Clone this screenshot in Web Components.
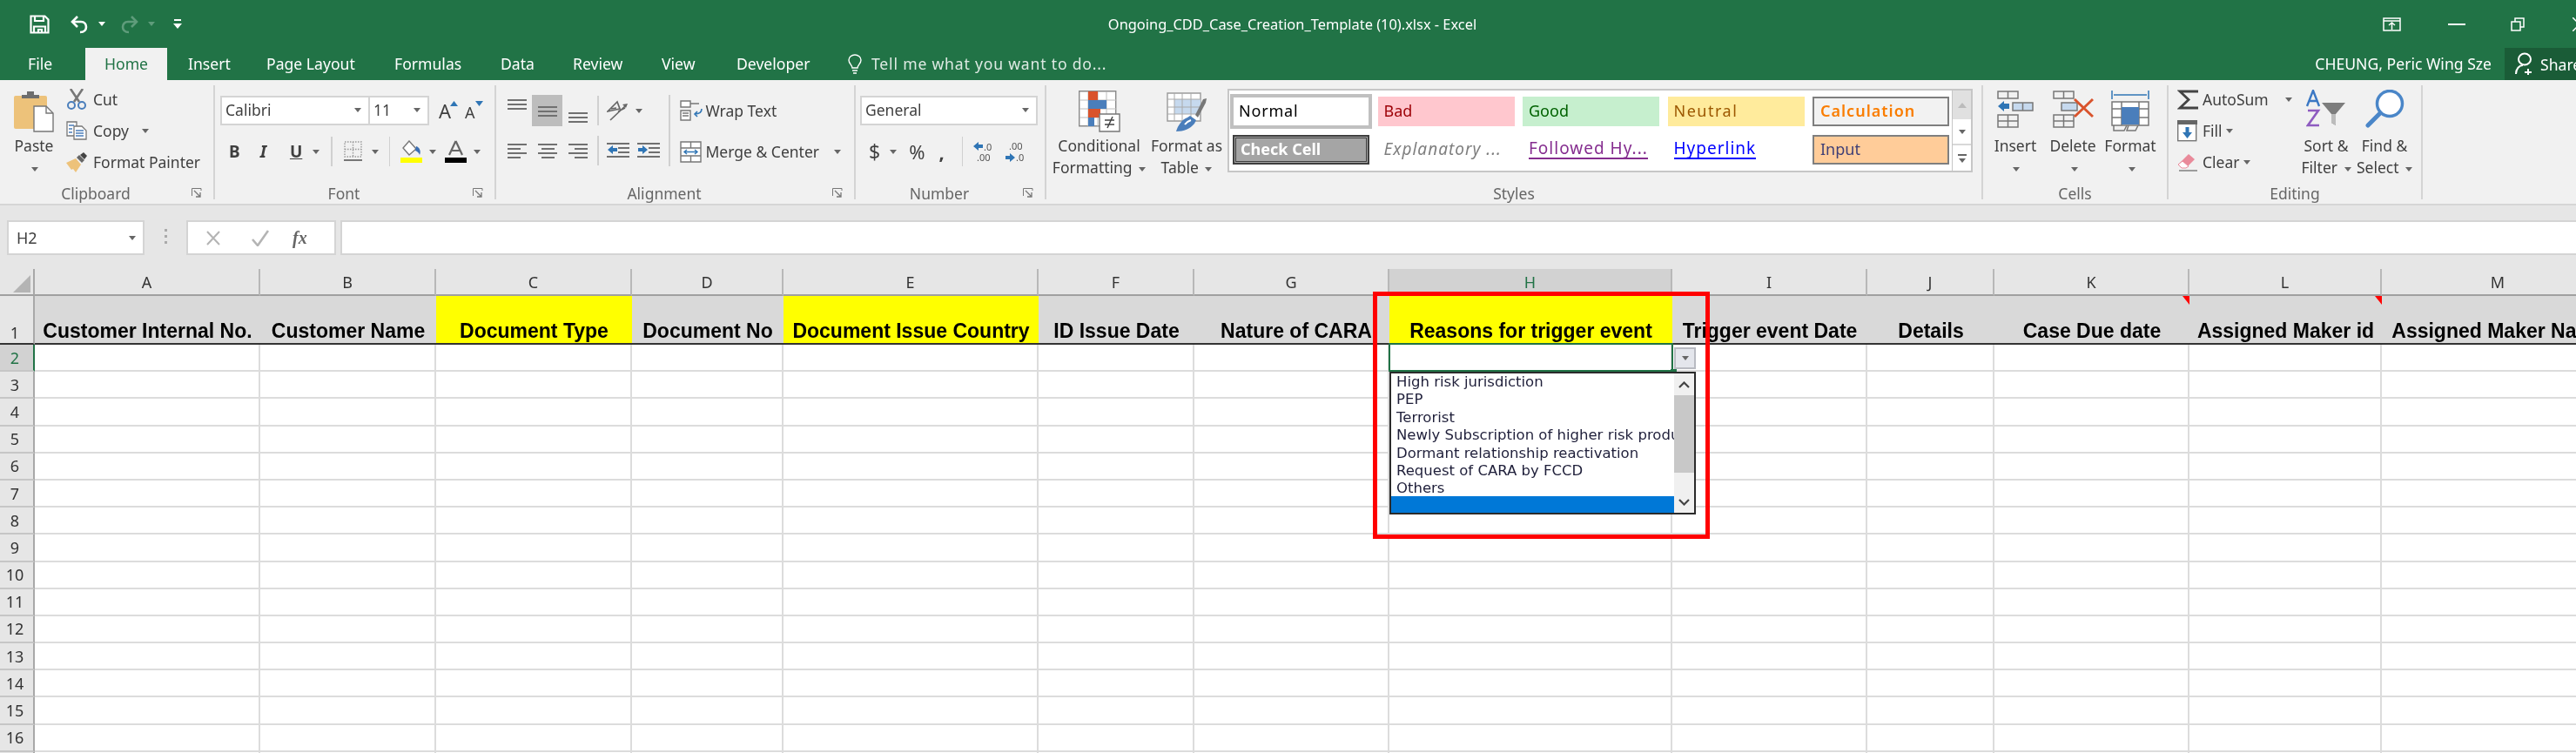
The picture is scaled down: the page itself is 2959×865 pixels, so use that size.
<!DOCTYPE html>
<html lang="en">
<head>
<meta charset="utf-8">
<title>Ongoing_CDD_Case_Creation_Template (10).xlsx - Excel</title>
<style>
    html, body { margin: 0; height: 865px; overflow: hidden; background: #fff; }
    body { display: flex; flex-direction: column; width: 2959px; font-family: "Noto Sans", sans-serif; filter: blur(.45px); }
</style>
</head>
<body>
<excel-titlebar></excel-titlebar>
<excel-tabs></excel-tabs>
<excel-ribbon></excel-ribbon>
<excel-formula-bar></excel-formula-bar>
<excel-sheet></excel-sheet>

<script>
// small helpers shared by the components
const caret = (color = '#666') => `<i style="display:inline-block;width:0;height:0;border:4.5px solid transparent;border-bottom:0;border-top:5px solid ${color}"></i>`;
const lines = (rows, w = 24, h = 18) => `<svg width="${w}" height="${h}" viewBox="0 0 ${w} ${h}" fill="#707070">${rows.map(r => `<rect x="${r[0]}" y="${r[1]}" width="${r[2]}" height="2"/>`).join('')}</svg>`;

const icons = {
    save: `<svg width="23" height="22" viewBox="0 0 23 22" fill="none" stroke="#fff" stroke-width="2.2"><path d="M1.5 1.5h16l4 4v15h-20z"/><path d="M6 2v5h10V2"/><path d="M5 20.5v-7h13v7M10 20v-3h4v3"/></svg>`,
    undo: `<svg width="22" height="22" viewBox="0 0 22 22" fill="none" stroke="#fff" stroke-width="2.6"><path d="M9 2 3 8l6 6"/><path d="M3 8h10c4 0 6 3 6 6s-2 6-7 6"/></svg>`,
    redo: `<svg width="22" height="22" viewBox="0 0 22 22" fill="none" stroke="#5f9c7b" stroke-width="2.6"><path d="m13 2 6 6-6 6"/><path d="M19 8H9c-4 0-6 3-6 6s2 6 7 6"/></svg>`,
    bulb: `<svg width="18" height="24" viewBox="0 0 18 24" fill="none" stroke="#fff" stroke-width="1.4"><path d="M6 16c0-3-4-5-4-9a7 6 0 0 1 14 0c0 4-4 6-4 9z"/><path d="M6 19h6M7 22h4"/></svg>`,
    person: `<svg width="24" height="27" viewBox="0 0 24 27" fill="none" stroke="#fff" stroke-width="2"><ellipse cx="12" cy="8" rx="7" ry="6.5"/><path d="M2 25c0-6 4-10 8-10M16 19v7M12 23h8"/></svg>`,
    paste: `<svg width="46" height="48" viewBox="0 0 46 48"><rect x="0" y="6" width="38" height="38" rx="2" fill="#edc27a"/><path d="M9 9V5h6V1h8v4h6v4z" fill="#6e6e6e"/><path d="M23 18h14l8 8v21H23z" fill="#fff" stroke="#777" stroke-width="1.4"/><path d="M37 18v8h8" fill="none" stroke="#777" stroke-width="1.4"/></svg>`,
    cut: `<svg width="24" height="24" viewBox="0 0 24 24" fill="none"><path d="M5 0 15 15M19 0 9 15" stroke="#777" stroke-width="2.6"/><circle cx="6" cy="19" r="4" stroke="#4a7ebb" stroke-width="2"/><circle cx="18" cy="19" r="4" stroke="#4a7ebb" stroke-width="2"/></svg>`,
    copy: `<svg width="24" height="22" viewBox="0 0 24 22" fill="#fff" stroke="#777" stroke-width="1.3"><path d="M1 1h11v16H1z"/><path d="M9 6h9l5 5v10H9z"/><path d="M3 5h6M3 9h4M3 13h4" stroke="#4a7ebb"/><path d="M11 11h9M11 14h9M11 17h9" stroke="#4a7ebb"/></svg>`,
    painter: `<svg width="25" height="23" viewBox="0 0 25 23"><path d="M0 12 11 7l6 7-6 9-3-4-2 1z" fill="#edc27a"/><path d="m12 6 6 6 3-3-6-6z" fill="#666"/><path d="m16 3 5 5 3-4-4-4z" fill="#444"/></svg>`,
    borders: `<svg width="21" height="25" viewBox="0 0 21 25" fill="none" stroke="#999" stroke-width="1.4" stroke-dasharray="1.5 1.5"><path d="M1 1h19v17H1zM10.500 1v17M1 9.500h19"/><path d="M0 22h21" stroke="#777" stroke-width="2" stroke-dasharray="none"/></svg>`,
    fill: `<svg width="25" height="26" viewBox="0 0 25 26"><path d="M10 1 3 9l7 8 8-7z" fill="#fff" stroke="#777" stroke-width="1.4"/><path d="M18 7c4 1 6 6 4 10-1-3-3-4-5-5z" fill="#3b6fb5"/><rect y="20" width="25" height="6" fill="#ff0"/></svg>`,
    fontcolor: `<svg width="25" height="26" viewBox="0 0 25 26"><path d="M12.500 1 5 17m15 0L12.500 1M8 12h9" fill="none" stroke="#666" stroke-width="2.200"/><rect y="20" width="25" height="6" fill="#000"/></svg>`,
    orient: `<svg width="25" height="24" viewBox="0 0 25 24" fill="none" stroke="#666" stroke-width="1.7"><path d="M1 13 12 2l3 8zM5 10l6-1M13 13l8-4M4 23 22 6"/><path d="m24 4-6 1 4 4z" fill="#666" stroke="none"/></svg>`,
    indentL: `<svg width="26" height="20" viewBox="0 0 26 20"><path d="M0 1h26v2H0zM13 6h13v2H13zM13 11h13v2H13zM0 16h26v2H0z" fill="#707070"/><path d="m1 9 6-5v3h5v4H7v3z" fill="#2f75b5"/></svg>`,
    indentR: `<svg width="26" height="20" viewBox="0 0 26 20"><path d="M0 1h26v2H0zM13 6h13v2H13zM13 11h13v2H13zM0 16h26v2H0z" fill="#707070"/><path d="m12 9-6-5v3H1v4h5v3z" fill="#2f75b5"/></svg>`,
    wrap: `<svg width="26" height="24" viewBox="0 0 26 24" fill="none"><path d="M1 1h11v7H1zM1 12h11v11H1z" stroke="#777" stroke-width="1.400" fill="#fff"/><path d="M3 15h7M3 18h7M12 4h10" stroke="#777" stroke-width="1.400"/><path d="M25 10c0 4-3 6-8 6m3-3-3 3 3 3" stroke="#2f75b5" stroke-width="1.600"/></svg>`,
    merge: `<svg width="25" height="25" viewBox="0 0 25 25" fill="#fff" stroke="#777" stroke-width="1.400"><path d="M1 1h23v23H1zM1 8h23M1 17h23M12.500 1v7M12.500 17v7"/><path d="M5 12.500h15M8 10l-3 2.500L8 15M17 10l3 2.500-3 2.500" stroke="#2f75b5" fill="none"/></svg>`,
    cond: `<svg width="48" height="48" viewBox="0 0 48 48"><path d="M.7.7h42v40H.7z" fill="#fff" stroke="#8a8a8a" stroke-width="1.4"/><path d="M11 1v40M22 1v40M32 1v40M1 11h42M1 21h42M1 31h42" stroke="#bdbdbd"/><rect x="11" y="1" width="11" height="10" fill="#d9532c"/><rect x="11" y="11" width="21" height="10" fill="#4a7ebb"/><rect x="11" y="21" width="14" height="10" fill="#d9532c"/><rect x="11" y="31" width="7" height="10" fill="#4a7ebb"/><path d="M24 27h23v20H24z" fill="#fff" stroke="#777" stroke-width="1.400"/><path d="M30 34h11M30 39h11M39 30l-6 13" stroke="#444" stroke-width="1.500" fill="none"/></svg>`,
    table: `<svg width="46" height="45" viewBox="0 0 46 45"><path d="M1 1h38v32H1z" fill="#fff" stroke="#9a9a9a" stroke-width="1.400"/><rect x="9" y="8" width="30" height="17" fill="#c6d9ee"/><path d="M9 1v32M18 1v32M28 1v32M1 8h38M1 17h38M1 25h38" stroke="#aaa"/><path d="m33 26 9-18 4-1-1 5-9 17z" fill="#777"/><path d="M11 45c2-7 7-14 13-16l3-2 7 5-2 4c-5 6-12 9-21 9z" fill="#4a7ebb"/><path d="M21 37c2-3 4-4 7-5" stroke="#fff" stroke-width="2" fill="none"/></svg>`,
    insert: `<svg width="42" height="43" viewBox="0 0 42 43" fill="none" stroke="#777" stroke-width="1.500"><path d="M1 1h23v8H1zM12.500 1v8M1 28h23v14H1zM12.500 28v14M1 35h23"/><path d="M18 14h23v9H18zM29.500 14v9" fill="#c6d9ee"/><path d="m1 18 7-6v3h6v6H8v3z" fill="#2f75b5" stroke="none"/></svg>`,
    del: `<svg width="47" height="43" viewBox="0 0 47 43" fill="none" stroke="#777" stroke-width="1.500"><path d="M1 1h23v8H1zM12.500 1v8M1 28h23v14H1zM12.500 28v14M1 35h23"/><path d="M10 14h18v9H10z" fill="#c6d9ee"/><path d="m25 10 21 20M46 10 25 30" stroke="#d9532c" stroke-width="3"/></svg>`,
    format: `<svg width="44" height="49" viewBox="0 0 44 49" fill="none" stroke="#777" stroke-width="1.500"><path d="M1 1v10M43 1v10" stroke="#2f75b5"/><path d="M3 6h38" stroke="#2f75b5"/><path d="M1 14h42v27H1z" fill="#fff"/><path d="M12 14v27M32 14v27M1 22h42M1 32h42"/><rect x="12" y="20" width="20" height="20" fill="#4a7ebb" stroke="none"/><path d="M3 41v6h12l3-6M20 41l-2 6h10l3-6"/></svg>`,
    sigma: `<svg width="25" height="25" viewBox="0 0 25 25" fill="none" stroke="#444" stroke-width="2.800"><path d="M24 3H3l10 9.500L3 22h21"/></svg>`,
    filldown: `<svg width="23" height="25" viewBox="0 0 23 25"><rect x=".7" y=".7" width="21" height="23" fill="#fff" stroke="#777" stroke-width="1.400"/><rect width="23" height="5" fill="#666"/><path d="M11.500 21 6 14h3.500V8h4v6H17z" fill="#2f75b5"/></svg>`,
    clear: `<svg width="24" height="21" viewBox="0 0 24 21"><path d="M1 13 13 1l7 6-10 10H5z" fill="#e98a9a"/><path d="m1 13 5-4 7 6-3 2H5z" fill="#fff" stroke="#e98a9a"/><path d="M2 20h21" stroke="#777" stroke-width="1.400"/></svg>`,
    sort: `<svg width="46" height="44" viewBox="0 0 46 44" fill="none"><path d="M1 19 8 1l7 18M4 13h8" stroke="#3b78c4" stroke-width="2.400"/><path d="M2 24h12L2 41h13" stroke="#8e5bc0" stroke-width="2.600"/><path d="M18 15h27L34 28v13l-5-3V28z" fill="#7d7d7d"/><path d="M29 28v10l5 3V28" fill="#bcbcbc"/></svg>`,
    find: `<svg width="46" height="44" viewBox="0 0 46 44" fill="none"><circle cx="29" cy="16" r="14.500" fill="#fff" stroke="#4a86c8" stroke-width="3.500"/><path d="M18 27 4 41" stroke="#4a86c8" stroke-width="5" stroke-linecap="round"/></svg>`,
    launcher: `<svg width="12" height="12" viewBox="0 0 12 12" fill="none" stroke="#777"><path d="M.5 9V.5H11V3"/><path d="M3 3l7 7M10 5v5H5" stroke-width="1.300"/></svg>`
};

class ExcelTitlebar extends HTMLElement {
    constructor() {
        super();
        this.attachShadow({ mode: 'open' });
        this.shadowRoot.innerHTML = `
            <style>
                :host { display: grid; grid-template-columns: 1fr auto 1fr; align-items: center; height: 55px; background: #217346; color: #fff; font: 16.400px "Noto Sans", sans-serif; }
                .qat, .win { display: flex; align-items: center; }
                .qat { padding-left: 34px; }
                .title { padding-left: 10px; }
                .win { justify-content: flex-end; }
                .win svg { display: block; }
            </style>
            <div class="qat">
                ${icons.save}
                <span style="margin-left:23px;display:flex">${icons.undo}</span>
                <span style="margin-left:11px;display:flex">${caret('#fff')}</span>
                <span style="margin-left:17px;display:flex">${icons.redo}</span>
                <span style="margin-left:10px;display:flex">${caret('#5f9c7b')}</span>
                <svg style="margin-left:21px" width="10" height="12" viewBox="0 0 10 12" fill="#fff"><rect x="1" width="8" height="2"/><path d="M0 5h10l-5 6z"/></svg>
            </div>
            <div class="title">Ongoing_CDD_Case_Creation_Template (10).xlsx - Excel</div>
            <div class="win">
                <svg width="21" height="16" viewBox="0 0 21 16" fill="none" stroke="#fff" stroke-width="1.500"><path d="M1 1h19v14H1zM1 4h19M10.500 14V6M7 9l3.500-3L14 9"/></svg>
                <svg style="margin-left:54px" width="20" height="2" viewBox="0 0 20 2"><rect width="20" height="2" fill="#fff"/></svg>
                <svg style="margin-left:52px" width="16" height="16" viewBox="0 0 16 16" fill="none" stroke="#fff" stroke-width="1.500"><path d="M1 5h10v10H1zM5 5V1h10v10h-4"/></svg>
                <svg style="margin-left:55px" width="4" height="16" viewBox="0 0 4 16" fill="none" stroke="#fff" stroke-width="1.500"><path d="M0 0 8 8M0 16 8 8"/></svg>
            </div>
        `;
    }
}

class ExcelTabs extends HTMLElement {
    constructor() {
        super();
        this.attachShadow({ mode: 'open' });
        const tabs = [['Insert', 90], ['Page Layout', 147], ['Formulas', 122], ['Data', 83], ['Review', 102], ['View', 86], ['Developer', 127]];
        this.shadowRoot.innerHTML = `
            <style>
                :host { display: flex; align-items: stretch; height: 37px; background: #217346; color: #fff; font: 17.600px/36px "Noto Sans", sans-serif; }
                span { white-space: nowrap; flex: none; }
                .file { margin-left: 32px; width: 66px; }
                .home { width: 94px; background: #f1f1f1; color: #217346; text-align: center; }
                .tell { margin-left: 10px; letter-spacing: .8px; opacity: .85; }
                .user { margin-left: auto; margin-right: 15px; }
                .share { display: flex; align-items: center; width: 82px; padding-left: 11px; box-sizing: border-box; background: #1a5c37; overflow: hidden; }
                svg { flex: none; }
            </style>
            <span class="file">File</span>
            <span class="home">Home</span>
            <span style="width:24px"></span>
            ${tabs.map(t => `<span style="width:${t[1]}px">${t[0]}</span>`).join('')}
            <span style="display:flex;align-items:center">${icons.bulb}</span>
            <span class="tell">Tell me what you want to do...</span>
            <span class="user">CHEUNG, Peric Wing Sze</span>
            <div class="share">${icons.person}<span style="margin-left:6px">Share</span></div>
        `;
    }
}

// one labelled section of the ribbon
class RibbonGroup extends HTMLElement {
    constructor() {
        super();
        this.attachShadow({ mode: 'open' });
        const launcher = this.hasAttribute('launcher') ? `<span class="launch">${icons.launcher}</span>` : '';
        this.shadowRoot.innerHTML = `
            <style>
                :host { display: flex; flex-direction: column; box-sizing: border-box; height: 131px; border-right: 2px solid #d4d4d4; flex: none; }
                .body { display: flex; height: 114px; flex: none; }
                .foot { display: flex; align-items: center; height: 20px; flex: none; color: #666; font-size: 17.500px; }
                .name { flex: 1; text-align: center; }
                .launch { width: 25px; display: flex; align-items: center; }
            </style>
            <div class="body"><slot></slot></div>
            <div class="foot"><span class="name">${this.getAttribute('label')}</span>${launcher}</div>
        `;
    }
}

// tall button: icon on top, one or two lines of text under it
class RibbonBig extends HTMLElement {
    constructor() {
        super();
        this.attachShadow({ mode: 'open' });
        const [first, second] = this.getAttribute('text').split('|');
        const lift = this.getAttribute('lift') || 0;
        this.shadowRoot.innerHTML = `
            <style>
                :host { display: flex; flex-direction: column; align-items: center; flex: none; }
                .ico { display: flex; align-items: flex-end; height: 54px; box-sizing: border-box; padding-bottom: ${lift}px; flex: none; }
                .txt { margin-top: 3px; text-align: center; line-height: 25px; white-space: nowrap; }
                .txt i { vertical-align: 2px; margin-left: 3px; }
                svg { display: block; }
            </style>
            <div class="ico">${icons[this.getAttribute('icon')]}</div>
            <div class="txt">${first}<br>${second || ''}${caret()}</div>
        `;
    }
}

class ExcelRibbon extends HTMLElement {
    constructor() {
        super();
        this.attachShadow({ mode: 'open' });
        this.shadowRoot.innerHTML = `
            <style>
                :host { display: flex; height: 144px; box-sizing: border-box; padding-top: 6px; background: #f1f1f1; border-bottom: 2px solid #d6d6d6; color: #3f3f3f; font: 17.500px "Noto Sans", sans-serif; }
                svg { display: block; flex: none; }
                i { flex: none; }
                .col { display: flex; flex-direction: column; }
                .small { display: flex; align-items: center; box-sizing: border-box; height: 36px; padding-bottom: 4px; white-space: nowrap; }
                .small .lead { width: 31px; flex: none; }
                .row { display: flex; align-items: center; }
                .r1 { height: 34px; margin-top: 12px; }
                .r2 { height: 34px; margin-top: 13px; }
                .combo { display: flex; align-items: center; justify-content: space-between; box-sizing: border-box; height: 34px; padding: 0 8px 2px 4px; background: #fff; border: 2px solid #d4d4d4; }
                .sep { width: 1.500px; height: 34px; background: #d0d0d0; flex: none; }
                .cell { display: flex; align-items: center; justify-content: center; width: 35px; height: 36px; flex: none; }
                .on { background: #bdbdbd; }
                b, em, u { font-style: normal; font-weight: 700; }
                .gal { display: flex; box-sizing: border-box; width: 856px; height: 96px; margin: 4px 0 0 7px; background: #fff; border: 2px solid #c6c6c6; flex: none; }
                .grid { display: grid; grid-template-columns: repeat(5, 157px); grid-template-rows: 34px 34px; column-gap: 9.500px; row-gap: 10px; padding: 7px 0 0 4px; width: 831px; box-sizing: border-box; font-size: 18px; }
                .st { display: flex; align-items: center; box-sizing: border-box; padding: 0 0 2px 7px; overflow: hidden; white-space: nowrap; }
                .scroll { display: flex; flex-direction: column; width: 21px; flex: none; border-left: 1px solid #c6c6c6; }
                .scroll span { display: flex; align-items: center; justify-content: center; }
            </style>

            <rb-group label="Clipboard" launcher style="width:247px">
                <div style="display:flex;padding-left:14px">
                    <rb-big icon="paste" text="Paste" style="width:50px"></rb-big>
                    <div class="col" style="margin-left:12px">
                        <div class="small"><span class="lead">${icons.cut}</span>Cut</div>
                        <div class="small"><span class="lead">${icons.copy}</span>Copy<span style="margin-left:15px;display:flex">${caret()}</span></div>
                        <div class="small"><span class="lead">${icons.painter}</span>Format Painter</div>
                    </div>
                </div>
            </rb-group>

            <rb-group label="Font" launcher style="width:323px">
                <div class="col" style="padding-left:6px">
                    <div class="row r1">
                        <div class="combo" style="width:172px"><span>Calibri</span>${caret()}</div>
                        <div class="combo" style="width:68px;border-left:0"><span>11</span>${caret()}</div>
                        <span style="margin-left:11px;font-size:22px">A</span>
                        <svg style="margin:-16px 0 0 -1px" width="9" height="6" viewBox="0 0 9 6"><path d="M4.500 0 9 6H0z" fill="#2f75b5"/></svg>
                        <span style="margin-left:8px;font-size:18px;padding-top:4px">A</span>
                        <svg style="margin:-16px 0 0 0" width="9" height="6" viewBox="0 0 9 6"><path d="M0 0h9L4.500 6z" fill="#2f75b5"/></svg>
                    </div>
                    <div class="row r2">
                        <b style="margin-left:10px;font-size:19px">B</b>
                        <em style="margin-left:23px;font-size:19px;font-style:italic">I</em>
                        <u style="margin-left:27px;font-size:19px">U</u>
                        <span style="margin-left:12px;display:flex">${caret()}</span>
                        <span class="sep" style="margin-left:13px"></span>
                        <span style="margin-left:13px">${icons.borders}</span>
                        <span style="margin-left:11px;display:flex">${caret()}</span>
                        <span class="sep" style="margin-left:12px"></span>
                        <span style="margin-left:12px">${icons.fill}</span>
                        <span style="margin-left:8px;display:flex">${caret()}</span>
                        <span style="margin-left:10px">${icons.fontcolor}</span>
                        <span style="margin-left:8px;display:flex">${caret()}</span>
                    </div>
                </div>
            </rb-group>

            <rb-group label="Alignment" launcher style="width:413px">
                <div style="display:flex;padding-left:6px">
                    <div class="col" style="width:192px">
                        <div class="row" style="height:36px;margin-top:11px">
                            <span class="cell" style="align-items:flex-start;padding-top:4px;box-sizing:border-box">${lines([[0,1,22],[0,6,22],[0,11,22]],22,13)}</span>
                            <span class="cell on">${lines([[0,1,22],[0,6,22],[0,11,22]],22,13)}</span>
                            <span class="cell" style="align-items:flex-end;padding-bottom:4px;box-sizing:border-box">${lines([[0,0,22],[0,5,22],[0,10,22]],22,12)}</span>
                            <span class="sep" style="margin-left:5px"></span>
                            <span style="margin-left:9px">${icons.orient}</span>
                            <span style="margin-left:8px;display:flex">${caret()}</span>
                        </div>
                        <div class="row r2" style="margin-top:11px">
                            <span class="cell">${lines([[0,1,22],[0,6,15],[0,11,22],[0,16,15]],22,18)}</span>
                            <span class="cell">${lines([[0,1,22],[4,6,15],[0,11,22],[4,16,15]],22,18)}</span>
                            <span class="cell">${lines([[0,1,22],[7,6,15],[0,11,22],[7,16,15]],22,18)}</span>
                            <span class="sep" style="margin-left:5px"></span>
                            <span style="margin-left:9px">${icons.indentL}</span>
                            <span style="margin-left:9px;width:26px;overflow:hidden;flex:none">${icons.indentR}</span>
                        </div>
                    </div>
                    <span class="sep" style="height:82px;margin-top:11px"></span>
                    <div class="col" style="margin-left:11px">
                        <div class="row" style="height:34px;margin-top:12px"><span style="width:30px;flex:none">${icons.wrap}</span>Wrap Text</div>
                        <div class="row" style="height:34px;margin-top:13px"><span style="width:30px;flex:none">${icons.merge}</span>Merge &amp; Center<span style="margin-left:17px;display:flex">${caret()}</span></div>
                    </div>
                </div>
            </rb-group>

            <rb-group label="Number" launcher style="width:219px">
                <div class="col" style="padding-left:5px">
                    <div class="row r1"><div class="combo" style="width:204px"><span>General</span>${caret()}</div></div>
                    <div class="row r2">
                        <span style="margin-left:10px;font-size:23px">$</span>
                        <span style="margin-left:11px;display:flex">${caret()}</span>
                        <span style="margin-left:14px;font-size:22px">%</span>
                        <b style="margin-left:16px;font-size:22px;font-weight:700;line-height:24px">,</b>
                        <span class="sep" style="margin-left:20px"></span>
                        <svg style="margin-left:12px" width="24" height="25" viewBox="0 0 24 25"><path d="M0 6 6 1v3h5v4H6v3z" fill="#2f75b5"/><text x="12" y="11" font-size="11" fill="#555" font-family="Noto Sans">.0</text><text x="4" y="23" font-size="11" fill="#555" font-family="Noto Sans">.00</text></svg>
                        <svg style="margin-left:13px" width="24" height="25" viewBox="0 0 24 25"><text x="4" y="10" font-size="11" fill="#555" font-family="Noto Sans">.00</text><path d="M11 19 5 24v-3H0v-4h5v-3z" fill="#2f75b5"/><text x="12" y="23" font-size="11" fill="#555" font-family="Noto Sans">.0</text></svg>
                    </div>
                </div>
            </rb-group>

            <rb-group label="Styles" style="width:1076px">
                <div style="display:flex;padding-left:8px">
                    <rb-big icon="cond" text="Conditional|Formatting " style="width:105px"></rb-big>
                    <rb-big icon="table" text="Format as|Table " lift="1" style="width:80px;margin-left:8px"></rb-big>
                    <div class="gal">
                        <div class="grid">
                            <div class="st" style="background:#fff;color:#000;outline:4px solid #c0c0c0;outline-offset:-1px;letter-spacing:.8px">Normal</div>
                            <div class="st" style="background:#ffc7ce;color:#9c0006">Bad</div>
                            <div class="st" style="background:#c6efce;color:#006100">Good</div>
                            <div class="st" style="background:#ffeb9c;color:#9c5700;letter-spacing:1.500px">Neutral</div>
                            <div class="st" style="background:#f2f2f2;color:#fa7d00;font-weight:600;letter-spacing:1px;border:2px solid #7f7f7f">Calculation</div>
                            <div class="st" style="background:#a5a5a5;color:#fff;font-weight:700;border:2px solid #3f3f3f;outline:1px solid #3f3f3f;outline-offset:-4px">Check Cell</div>
                            <div class="st" style="color:#7f7f7f;font-style:italic;font-size:19px;letter-spacing:1px">Explanatory ...</div>
                            <div class="st" style="color:#852d8f;font-size:19px;letter-spacing:1px"><span style="border-bottom:2px solid #852d8f;line-height:22px">Followed Hy...</span></div>
                            <div class="st" style="color:#0000ff;font-size:19px;letter-spacing:1px"><span style="border-bottom:2px solid #0000ff;line-height:22px">Hyperlink</span></div>
                            <div class="st" style="background:#ffcc99;color:#3f3f76;border:2px solid #7f7f7f">Input</div>
                        </div>
                        <div class="scroll">
                            <span style="height:33px;background:#e0e0e0"><svg width="10" height="6" viewBox="0 0 10 6"><path d="M5 0l5 6H0z" fill="#bbb"/></svg></span>
                            <span style="height:28px;border-bottom:2px solid #d8d8d8;box-sizing:content-box">${caret('#666')}</span>
                            <span style="height:29px;flex-direction:column;gap:3px"><svg width="10" height="2"><rect width="10" height="2" fill="#666"/></svg>${caret('#666')}</span>
                        </div>
                    </div>
                </div>
            </rb-group>

            <rb-group label="Cells" style="width:213px">
                <div style="display:flex;padding-left:4px">
                    <rb-big icon="insert" text="Insert" lift="5" style="width:66px"></rb-big>
                    <rb-big icon="del" text="Delete" lift="5" style="width:66px"></rb-big>
                    <rb-big icon="format" text="Format" style="width:66px"></rb-big>
                </div>
            </rb-group>

            <rb-group label="Editing" style="width:292px">
                <div style="display:flex;padding-left:10px">
                    <div class="col" style="width:138px">
                        <div class="small"><span class="lead" style="width:29px">${icons.sigma}</span>AutoSum<span style="margin-left:19px;display:flex">${caret()}</span></div>
                        <div class="small"><span class="lead" style="width:29px">${icons.filldown}</span>Fill<span style="margin-left:4px;display:flex">${caret()}</span></div>
                        <div class="small"><span class="lead" style="width:29px">${icons.clear}</span>Clear<span style="margin-left:4px;display:flex">${caret()}</span></div>
                    </div>
                    <rb-big icon="sort" text="Sort &amp;|Filter " lift="5" style="width:66px"></rb-big>
                    <rb-big icon="find" text="Find &amp;|Select " lift="5" style="width:66px;margin-left:1px"></rb-big>
                </div>
            </rb-group>
        `;
    }
}

class ExcelFormulaBar extends HTMLElement {
    constructor() {
        super();
        this.attachShadow({ mode: 'open' });
        this.shadowRoot.innerHTML = `
            <style>
                :host { display: flex; align-items: flex-start; height: 73px; box-sizing: border-box; padding: 17px 0 0 8px; background: #e6e6e6; color: #3f3f3f; font: 18px "Noto Sans", sans-serif; }
                .box { display: flex; align-items: center; box-sizing: border-box; height: 40px; background: #fff; border: 2px solid #d4d4d4; }
                .name { width: 158px; padding: 0 8px 0 9px; justify-content: space-between; }
                .grip { width: 48px; display: flex; flex-direction: column; align-items: center; gap: 4px; padding-top: 10px; }
                .grip i { width: 3px; height: 3px; background: #aaa; }
                .btns { width: 172px; }
                .input { flex: 1; margin-left: 5px; border-right: 0; }
            </style>
            <div class="box name"><span>H2</span>${caret('#666')}</div>
            <div class="grip"><i></i><i></i><i></i></div>
            <div class="box btns">
                <svg style="margin-left:20px" width="18" height="17" viewBox="0 0 18 17" fill="none" stroke="#b4b4b4" stroke-width="2"><path d="m2 1 14 15M16 1 2 16"/></svg>
                <svg style="margin-left:35px" width="20" height="19" viewBox="0 0 20 19" fill="none" stroke="#b4b4b4" stroke-width="2.600"><path d="m1 11 6 7L19 1"/></svg>
                <span style="margin-left:27px;font:italic 700 20px 'Liberation Serif',serif;color:#666">fx</span>
            </div>
            <div class="box input"></div>
        `;
    }
}

class SheetDropdown extends HTMLElement {
    constructor() {
        super();
        this.attachShadow({ mode: 'open' });
        const items = ['High risk jurisdiction', 'PEP', 'Terrorist', 'Newly Subscription of higher risk products', 'Dormant relationship reactivation', 'Request of CARA by FCCD', 'Others', ''];
        this.shadowRoot.innerHTML = `
            <style>
                :host { display: flex; box-sizing: border-box; width: 352px; height: 164px; background: #fff; border: 2px solid #2b2b2b; color: #1f1f3a; font: 16.500px/20.400px "DejaVu Sans", sans-serif; }
                .list { width: 325px; flex: none; overflow: hidden; }
                .item { height: 20.400px; padding-left: 6px; white-space: nowrap; }
                .item.sel { background: #0078d7; height: 21px; margin-top: -2px; }
                .bar { flex: 1; display: flex; flex-direction: column; background: #f0f0f0; }
                .arrow { height: 25px; display: flex; align-items: center; justify-content: center; flex: none; }
                .thumb { height: 89px; background: #c8c8c8; flex: none; }
                .gap { flex: 1; }
            </style>
            <div class="list">${items.map(t => `<div class="item${t ? '' : ' sel'}">${t}</div>`).join('')}</div>
            <div class="bar">
                <div class="arrow"><svg width="13" height="8" viewBox="0 0 13 8" fill="none" stroke="#444" stroke-width="2.200"><path d="m1 7 5.500-5.500L12 7"/></svg></div>
                <div class="thumb"></div>
                <div class="gap"></div>
                <div class="arrow"><svg width="13" height="8" viewBox="0 0 13 8" fill="none" stroke="#444" stroke-width="2.200"><path d="m1 1 5.500 5.500L12 1"/></svg></div>
            </div>
        `;
    }
}

class ExcelSheet extends HTMLElement {
    constructor() {
        super();
        this.attachShadow({ mode: 'open' });
        const cols = [
            ['A', 259, 'Customer Internal No.'], ['B', 202, 'Customer Name'], ['C', 225, 'Document Type', 1],
            ['D', 174, 'Document No'], ['E', 293, 'Document Issue Country', 1], ['F', 179, 'ID Issue Date'],
            ['G', 224, 'Nature of CARA'], ['H', 325, 'Reasons for trigger event', 1], ['I', 224, 'Trigger event Date'],
            ['J', 146, 'Details'], ['K', 224, 'Case Due date', 0, 1], ['L', 221, 'Assigned Maker id', 0, 1], ['M', 268, 'Assigned Maker Name']
        ];
        let html = '<div class="corner"><svg width="20" height="20" viewBox="0 0 20 20"><path d="M20 0v20H0z" fill="#b4b4b4"/></svg></div>';
        html += cols.map(c => `<div class="ch${c[0] === 'H' ? ' act' : ''}">${c[0]}</div>`).join('');
        html += '<div class="rh one">1</div>';
        html += cols.map(c => `<div class="hd${c[3] ? ' yel' : ''}"${c[0] === 'G' ? ' style="padding-left:10px"' : ''}>${c[2]}${c[4] ? '<i class="note"></i>' : ''}</div>`).join('');
        for (let r = 2; r <= 17; r++) {
            html += `<div class="rh${r === 2 ? ' act' : ''}">${r}</div>`;
            html += cols.map(() => '<div class="c"></div>').join('');
        }
        this.shadowRoot.innerHTML = `
            <style>
                :host { display: block; position: relative; flex: 1; overflow: hidden; background: #fff; }
                .grid { display: grid; width: 3004px; grid-template-columns: 40px ${cols.map(c => c[1] + 'px').join(' ')}; grid-template-rows: 31px 56px; grid-auto-rows: 31.200px; }
                .corner { background: #e6e6e6; border-right: 2px solid #a8a8a8; border-bottom: 2px solid #a0a0a0; box-sizing: border-box; padding: 7px 0 0 15px; }
                .corner svg { display: block; }
                .ch, .rh { display: flex; align-items: center; justify-content: center; box-sizing: border-box; background: #e6e6e6; color: #333; font: 18px "Noto Sans", sans-serif; }
                .ch { border-right: 2px solid #b8b8b8; border-bottom: 2px solid #a0a0a0; }
                .rh { border-right: 2px solid #a8a8a8; border-bottom: 2px solid #c6c6c6; padding-right: 4px; }
                .rh.one { align-items: flex-end; border-bottom: 2px solid #333; }
                .ch.act, .rh.act { background: #d2d2d2; color: #217346; }
                .rh.act { border-right: 2px solid #217346; }
                .hd { position: relative; display: flex; align-items: flex-end; justify-content: center; box-sizing: border-box; padding-bottom: 1px; background: #d9d9d9; border-bottom: 2px solid #333; color: #000; font: 700 23px/26px "Liberation Sans", sans-serif; white-space: nowrap; overflow: hidden; }
                .hd.yel { background: #ff0; }
                .note { position: absolute; top: 0; right: 0; border-top: 10px solid #f00; border-left: 8px solid transparent; }
                .c { box-sizing: border-box; border-right: 2px solid #dcdcdc; border-bottom: 2px solid #dcdcdc; }
                .active { position: absolute; left: 1595px; top: 85px; box-sizing: border-box; width: 327px; height: 33px; border: 2px solid #217346; }
                .handle { position: absolute; left: 1919px; top: 115px; width: 7px; height: 5px; background: #217346; }
                .btn { position: absolute; left: 1923px; top: 90px; display: flex; align-items: center; justify-content: center; box-sizing: border-box; width: 25px; height: 25px; background: #e4e6ec; border: 2px solid #b9bbc2; }
                sheet-dropdown { position: absolute; left: 1596px; top: 118px; }
                .mark { position: absolute; left: 1577px; top: 26px; box-sizing: border-box; width: 387px; height: 284px; border: 5px solid #f00; }
            </style>
            <div class="grid">${html}</div>
            <div class="active"></div>
            <div class="handle"></div>
            <div class="btn">${caret('#666')}</div>
            <sheet-dropdown></sheet-dropdown>
            <div class="mark"></div>
        `;
    }
}

customElements.define('rb-group', RibbonGroup);
customElements.define('rb-big', RibbonBig);
customElements.define('sheet-dropdown', SheetDropdown);
customElements.define('excel-titlebar', ExcelTitlebar);
customElements.define('excel-tabs', ExcelTabs);
customElements.define('excel-ribbon', ExcelRibbon);
customElements.define('excel-formula-bar', ExcelFormulaBar);
customElements.define('excel-sheet', ExcelSheet);
</script>
</body>
</html>
